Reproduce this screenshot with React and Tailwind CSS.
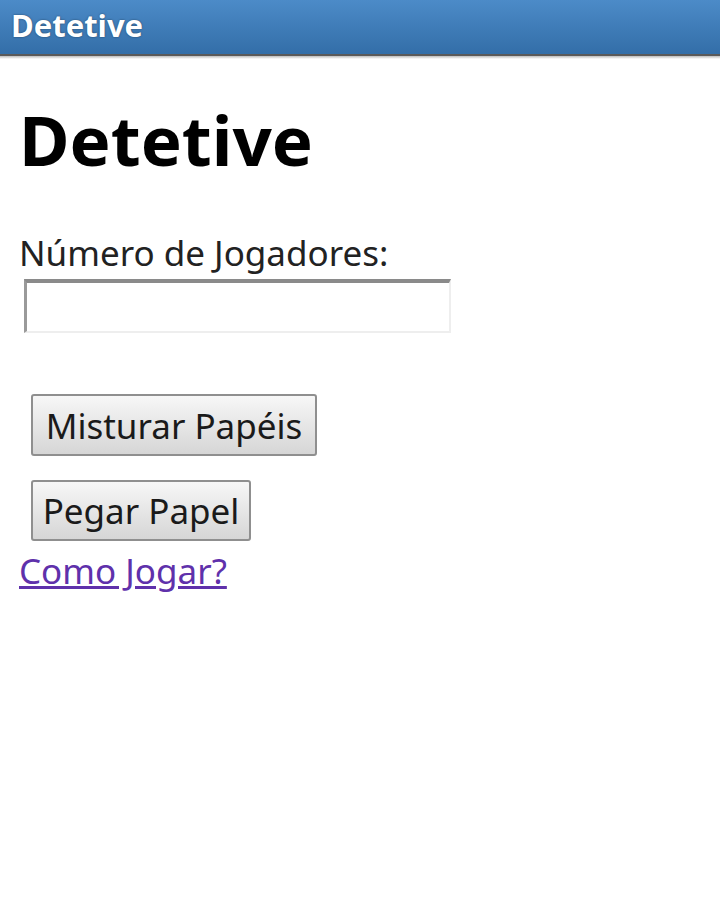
export default function App() {
  const font = { fontFamily: '"Noto Sans", "Open Sans", sans-serif' };
  return (
    <div className="w-[720px] h-[900px] bg-white" style={font}>
      <div className="h-[56px] bg-gradient-to-b from-[#4c8bc8] to-[#336ea8] flex items-center px-[11px] border-b-[2px] border-[#5a5a5a]">
        <span className="text-white font-bold text-[31px] leading-none [text-shadow:0_0_2px_rgba(0,0,0,0.5)] -mt-[4px]">Detetive</span>
      </div>
      <div className="h-[3px] bg-gradient-to-b from-[#bdbdbd] to-white" />
      <div className="px-[19px]">
        <h1 className="mt-[46px] text-[69px] font-bold leading-none text-black">Detetive</h1>
        <div className="mt-[61px] text-[35px] leading-none text-[#222]">Número de Jogadores:</div>
        <input className="mt-[9px] ml-[5px] block w-[427px] h-[54px] border-t-[4px] border-l-[3px] border-r-[2px] border-b-[2px] border-t-[#8a8a8a] border-l-[#9a9a9a] border-r-[#eeeeee] border-b-[#eeeeee] bg-white" />
        <div className="mt-[61px] ml-[12px] flex flex-col items-start gap-[24px]">
          <button className="h-[62px] w-[286px] rounded-[3px] border-[2px] border-[#8f8f8f] bg-gradient-to-b from-[#f7f7f7] to-[#d6d6d6] text-[35px] leading-none text-[#1a1a1a]">Misturar Papéis</button>
          <button className="h-[61px] w-[220px] rounded-[3px] border-[2px] border-[#8f8f8f] bg-gradient-to-b from-[#f7f7f7] to-[#d6d6d6] text-[35px] leading-none text-[#1a1a1a]">Pegar Papel</button>
        </div>
        <a href="#" className="block mt-[12px] text-[35px] leading-none text-[#5f31ab] underline w-fit">Como Jogar?</a>
      </div>
    </div>
  );
}
